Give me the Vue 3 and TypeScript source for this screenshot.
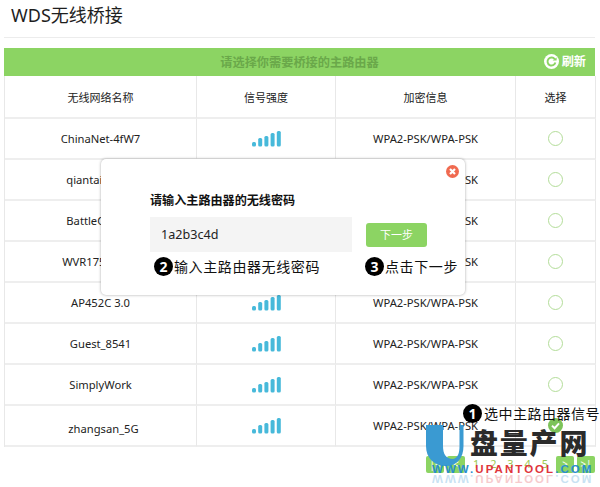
<script setup lang="ts">
const rows = ['ChinaNet-4fW7', 'qiantaizi_012', 'BattleCity_01', 'WVR1750_WiFi', 'AP452C 3.0', 'Guest_8541', 'SimplyWork', 'zhangsan_5G']
const bars = [
  { x: 0, y: 11, h: 4.5 },
  { x: 6.2, y: 7, h: 8.5 },
  { x: 12.4, y: 5, h: 10.5 },
  { x: 18.6, y: 2, h: 13.5 },
  { x: 24.8, y: 0, h: 15.5 },
]
const pages = ['1', '2', '3', '4', '5']
</script>

<template>
  <div class="page">
    <h1 class="title">WDS无线桥接</h1>
    <section class="panel">
      <div class="banner">
        <span class="banner-text">请选择你需要桥接的主路由器</span>
        <span class="refresh">
          <svg width="15" height="15" viewBox="0 0 15 15">
            <circle cx="7.5" cy="7.5" r="7.5" fill="#fff" />
            <path d="M10.8 5.2A4 4 0 1 0 11.4 8.6" fill="none" stroke="#8cd463" stroke-width="1.9" />
            <path d="M8.6 6.6H12.6V3.4Z" fill="#8cd463" />
          </svg>
          刷新
        </span>
      </div>
      <div class="grid">
        <div class="cell head">无线网络名称</div>
        <div class="cell head">信号强度</div>
        <div class="cell head">加密信息</div>
        <div class="cell head">选择</div>
        <template v-for="(name, i) in rows" :key="name">
          <div class="cell"><span :class="{ low: i === 7 }">{{ name }}</span></div>
          <div class="cell">
            <svg class="signal" width="29" height="16" viewBox="0 0 29 16">
              <rect v-for="b in bars" :key="b.x" :x="b.x" :y="b.y" width="4" :height="b.h" rx="1.5" fill="#47b9da" />
            </svg>
          </div>
          <div class="cell">WPA2-PSK/WPA-PSK</div>
          <div class="cell">
            <svg v-if="i === 7" width="15" height="15" viewBox="0 0 15 15">
              <circle cx="7.5" cy="7.5" r="7.5" fill="#7cc35a" />
              <path d="M4 7.6L6.6 10.2L11 5.4" fill="none" stroke="#fff" stroke-width="2" />
            </svg>
            <span v-else class="radio"></span>
          </div>
        </template>
      </div>
    </section>

    <div class="modal">
      <svg class="close" width="13" height="13" viewBox="0 0 13 13">
        <circle cx="6.5" cy="6.5" r="6.5" fill="#f06a50" />
        <path d="M4 4L9 9M9 4L4 9" stroke="#fff" stroke-width="2.2" />
      </svg>
      <div class="modal-label">请输入主路由器的无线密码</div>
      <div class="modal-row">
        <div class="input">1a2b3c4d</div>
        <div class="next">下一步</div>
      </div>
      <div class="modal-row notes">
        <div class="note"><span class="num">2</span>输入主路由器无线密码</div>
        <div class="note note-three"><span class="num">3</span>点击下一步</div>
      </div>
    </div>

    <div class="pager">
      <span class="pg-btn">&#124;&lt;</span><span class="pg-btn">&lt;</span>
      <span class="pg-nums"><span v-for="p in pages" :key="p">{{ p }}</span></span>
      <span class="pg-btn">&gt;</span><span class="pg-btn">&gt;&#124;</span>
    </div>

    <div class="note note-one"><span class="num">1</span>选中主路由器信号</div>

    <div class="mark">
      <svg class="u-logo" width="38" height="41" viewBox="0 0 38 41">
        <path d="M0 0H17V21C17 29 20 34 27 34C32 33 33.500 28 33.500 21V0H37.500V21C37.500 33 31 41 20 41C8 41 0 33 0 21Z" fill="#3a9ad2" />
      </svg>
      <div class="mark-title">盘量产网</div>
      <div class="mark-url"><span class="b">WWW.</span><span class="r">UPANTOOL</span><span class="b">.COM</span></div>
      <div class="mark-url mirror"><span class="b">WWW.</span><span class="r">UPANTOOL</span><span class="b">.COM</span></div>
    </div>
  </div>
</template>

<style>
html, body { margin: 0; background: #fff; }
</style>

<style scoped>
.page {
  position: relative;
  width: 600px;
  height: 487px;
  overflow: hidden;
  box-sizing: border-box;
  padding: 0 5px 0 4px;
  background: #fff;
  font-family: "Noto Sans", "Noto Sans CJK SC", sans-serif;
  color: #222;
}
.title {
  margin: 0;
  height: 37px;
  padding-left: 7px;
  border-bottom: 1px solid #ececec;
  font-size: 18px;
  font-weight: 400;
  line-height: 30px;
  color: #1e1e1e;
}
.panel { margin-top: 10px; }
.banner {
  position: relative;
  height: 28px;
  background: #8cd463;
  display: flex;
  align-items: center;
  justify-content: center;
  font-size: 12.2px;
  font-weight: 700;
}
.banner-text { color: #6aa84a; }
.refresh {
  position: absolute;
  right: 9px;
  top: 6px;
  display: flex;
  align-items: center;
  gap: 3px;
  color: #fff;
  line-height: 15px;
}
.grid {
  display: grid;
  grid-template-columns: 192px 139px 180px 80px;
  grid-template-rows: 43px repeat(8, 41px);
  border-left: 1px solid #e8e8e8;
}
.cell {
  display: flex;
  align-items: center;
  justify-content: center;
  box-sizing: border-box;
  border-right: 1px solid #e8e8e8;
  border-bottom: 2px solid #eeeeee;
  font-size: 11.2px;
  color: #222;
  white-space: nowrap;
}
.head { font-size: 11px; }
.low { position: relative; top: 3px; left: 3px; }
.radio {
  box-sizing: border-box;
  width: 15px;
  height: 15px;
  border: 1.5px solid #b3dd99;
  border-radius: 50%;
}
.modal {
  position: absolute;
  left: 101px;
  top: 159px;
  width: 364px;
  height: 136px;
  box-sizing: border-box;
  padding: 35px 38px 0 49px;
  background: #fff;
  border-radius: 5px;
  box-shadow: 0 0 3px rgba(0, 0, 0, 0.35);
}
.close { position: absolute; right: 6px; top: 6px; }
.modal-label { font-size: 12.1px; font-weight: 700; line-height: 14px; color: #111; }
.modal-row {
  display: flex;
  align-items: center;
  justify-content: space-between;
  margin-top: 9px;
}
.input {
  width: 202px;
  height: 35px;
  box-sizing: border-box;
  padding-left: 11px;
  line-height: 35px;
  background: #f4f4f4;
  font-size: 12.6px;
}
.next {
  width: 61px;
  height: 24px;
  margin-top: 1px;
  line-height: 24px;
  text-align: center;
  background: #8cd463;
  border-radius: 3px;
  color: #fff;
  font-size: 11px;
}
.notes { margin-top: 5px; padding-left: 4px; }
.note {
  display: flex;
  align-items: center;
  gap: 1px;
  font-size: 14px;
  letter-spacing: 0.6px;
  line-height: 19px;
  color: #111;
  white-space: nowrap;
}
.note-three { margin-right: -31px; }
.note-one { position: absolute; left: 463px; top: 404px; gap: 2px; letter-spacing: 0.5px; z-index: 3; }
.num {
  width: 19px;
  height: 19px;
  border-radius: 50%;
  background: #000;
  color: #fff;
  font-size: 14px;
  font-weight: 700;
  letter-spacing: 0;
  line-height: 19px;
  text-align: center;
  flex: none;
}
.pager {
  position: absolute;
  left: 426px;
  top: 456px;
  width: 169px;
  display: flex;
  align-items: flex-start;
  gap: 3px;
}
.pg-btn {
  width: 18px;
  height: 17px;
  background: #8cd463;
  border-radius: 2px;
  color: #fff;
  font-size: 10px;
  line-height: 16px;
  text-align: center;
}
.pg-nums {
  flex: 1;
  display: flex;
  justify-content: space-between;
  padding: 1px 5px 0;
  font-size: 11px;
  line-height: 14px;
  color: #9ac850;
}
.mark { position: absolute; left: 0; top: 0; width: 600px; height: 487px; pointer-events: none; }
.u-logo { position: absolute; left: 426px; top: 425px; }
.mark-title {
  position: absolute;
  left: 470px;
  top: 426px;
  font-size: 28px;
  line-height: 34px;
  font-weight: 900;
  letter-spacing: 1.8px;
  color: #2b2b2b;
  white-space: nowrap;
}
.mark-url {
  position: absolute;
  left: 432px;
  top: 463px;
  font-family: "Liberation Sans", sans-serif;
  font-size: 11.5px;
  line-height: 12px;
  font-weight: 700;
  letter-spacing: 2.05px;
  white-space: nowrap;
}
.mirror { top: 473px; transform: scaleY(-1); opacity: 0.25; }
.b { color: #2a8fd0; }
.r { color: #e0353c; }
</style>
